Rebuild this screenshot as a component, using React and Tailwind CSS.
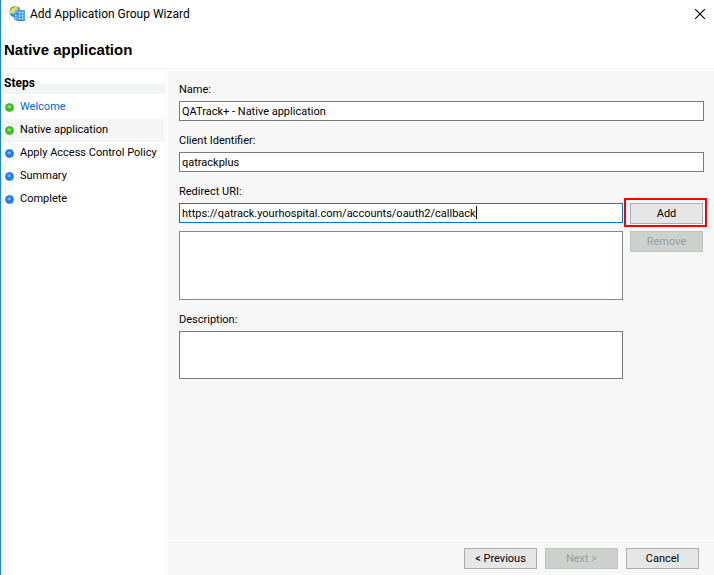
import { useLayoutEffect, useRef, useState } from 'react';
import clsx from 'clsx';

const STEPS = [
  { label: 'Welcome', state: 'done', link: true },
  { label: 'Native application', state: 'done', current: true },
  { label: 'Apply Access Control Policy', state: 'todo' },
  { label: 'Summary', state: 'todo' },
  { label: 'Complete', state: 'todo' },
];

function WizardIcon() {
  return (
    <svg width="16" height="16" viewBox="0 0 16 16" aria-hidden="true">
      <circle cx="6" cy="5.5" r="5.5" fill="#6cc0ee" />
      <path d="M.8 4C1.6 1.8 3.6.2 5.6 0L5 2 3 3.4 2.4 5Z" fill="#6aa637" />
      <path d="M1 5 3 2.6 6 .6 8.6 1.4 8 3.6 6 4.2 5.4 6.6 3.4 7.6 1.4 7Z" fill="#fad650" />
      <path d="M8.4.6C10 1.2 11.2 2.8 11.5 4.4L9.6 3.6Z" fill="#5fa548" />
      <path d="M.8 7.4 3.2 8 5.4 8.6V11C3.2 10.6 1.4 9.4.8 7.4Z" fill="#2a86cc" />
      <path d="M5 8.4 8.6 5.6V15.4L5 13Z" fill="#2f92e0" />
      <path d="M8.6 4.4 15.8 4V15H8.6Z" fill="#2b8ad8" />
      <path d="M9.6 5.6h2v2.2h-2zM12.6 5.4h2v2.2h-2zM9.6 8.8h2v2h-2zM12.6 8.6h2v2h-2zM9.6 11.8h2v2h-2zM12.6 11.6h2v2h-2zM6 8.8h1.5v1.6H6zM6 11.4h1.5V13H6z" fill="#aee4ff" />
    </svg>
  );
}

function StepDot({ done }) {
  return (
    <svg width="9" height="9" viewBox="0 0 9 9" className="shrink-0" aria-hidden="true">
      <circle cx="4.5" cy="4.5" r="4" fill={done ? '#3cc41c' : '#1c80fa'} stroke={done ? '#4fa03c' : '#2f70cc'} strokeWidth="0.8" />
      <ellipse cx="4.2" cy="3.8" rx="1.8" ry="1.4" fill={done ? '#8fe673' : '#78b6ff'} />
    </svg>
  );
}

function Field({ id, label, children }) {
  return (
    <div>
      <label htmlFor={id} className="block h-[22px] leading-[22px]">{label}</label>
      {children}
    </div>
  );
}

function WizardButton({ className, children, ...props }) {
  return (
    <button
      type="button"
      className={clsx(
        'h-[21px] w-[73px] border border-[#adadad] bg-[#e6e6e6] leading-4 whitespace-nowrap disabled:border-[#bfc5c1] disabled:bg-[#ccd1cd] disabled:text-[#9a9f9b]',
        className
      )}
      {...props}
    >
      {children}
    </button>
  );
}

const inputClass = 'block h-5 w-full border border-[#7a7a7a] bg-white px-0.5 outline-none';

// Text box with a steady, non-blinking caret at the end of the value
function CaretInput({ className, value, ...props }) {
  const ref = useRef(null);
  const [caretX, setCaretX] = useState(0);

  useLayoutEffect(() => {
    const ctx = document.createElement('canvas').getContext('2d');
    const style = getComputedStyle(ref.current);
    ctx.font = `${style.fontSize} ${style.fontFamily}`;
    setCaretX(Math.ceil(ctx.measureText(value).width) + 3);
  }, [value]);

  return (
    <div className="relative overflow-hidden">
      <input ref={ref} className={clsx(inputClass, 'caret-transparent', className)} value={value} {...props} />
      <span className="pointer-events-none absolute top-[3px] h-[13px] w-px bg-black" style={{ left: caretX }} />
    </div>
  );
}

export default function App() {
  const [name, setName] = useState('QATrack+ - Native application');
  const [clientId, setClientId] = useState('qatrackplus');
  const [redirectUri, setRedirectUri] = useState('https://qatrack.yourhospital.com/accounts/oauth2/callback');
  const [description, setDescription] = useState('');

  return (
    <div className="flex min-h-screen flex-col border-l border-[#1883d7] bg-white font-['Roboto',sans-serif] text-[11px] text-black">
      <header className="border-b border-[#f2f2f2]">
        <div className="flex h-7 items-center px-2">
          <WizardIcon />
          <span className="ml-[5px] flex-1 text-[12px]">Add Application Group Wizard</span>
          <button type="button" aria-label="Close" className="p-px">
            <svg width="10" height="10" viewBox="0 0 10 10" stroke="#000" strokeWidth="1.1" aria-hidden="true">
              <path d="M0 0 10 10M10 0 0 10" />
            </svg>
          </button>
        </div>
        <h1 className="flex h-10 items-center px-[3px] pt-1 font-['Liberation_Sans',sans-serif] text-[15px] font-bold">Native application</h1>
      </header>

      <div className="flex flex-1 pt-0.5">
        <nav className="mr-0.5 w-[165px] shrink-0 border-r border-[#f7f7f7]">
          <h2 className="h-[23px] bg-linear-to-b from-white from-55% to-[#f3f5f4] to-60% px-[3px] text-[12px] leading-6 font-bold">Steps</h2>
          <ul className="pt-0.5 pr-px">
            {STEPS.map((step) => (
              <li key={step.label} className={clsx('flex h-[23px] items-center gap-1.5 pl-1', step.current && 'bg-[#f5f5f5]')}>
                <StepDot done={step.state === 'done'} />
                {step.link ? (
                  <a href="#welcome" className="text-[#0066ee]">{step.label}</a>
                ) : (
                  <span className="whitespace-nowrap">{step.label}</span>
                )}
              </li>
            ))}
          </ul>
        </nav>

        <main className="flex min-w-0 flex-1 flex-col bg-[#f7f7f7]">
          <form className="flex flex-1 flex-col gap-[9px] pt-2 pr-2.5 pl-[11px]">
            <Field id="name" label="Name:">
              <input id="name" className={inputClass} value={name} onChange={(e) => setName(e.target.value)} />
            </Field>
            <Field id="client-id" label="Client Identifier:">
              <input id="client-id" className={inputClass} value={clientId} onChange={(e) => setClientId(e.target.value)} />
            </Field>
            <Field id="redirect-uri" label="Redirect URI:">
              <div className="flex gap-[7px]">
                <div className="flex min-w-0 flex-1 flex-col gap-2">
                  <CaretInput
                    id="redirect-uri"
                    autoFocus
                    className="focus:border-[#0078d7]"
                    value={redirectUri}
                    onChange={(e) => setRedirectUri(e.target.value)}
                  />
                  <select size={4} aria-label="Redirect URIs" className="h-[69px] w-full border border-[#828790] bg-white outline-none" />
                </div>
                <div className="flex flex-col gap-[7px] pr-px">
                  <div className="relative flex">
                    <WizardButton>Add</WizardButton>
                    <span className="pointer-events-none absolute -top-[5px] -right-1 -bottom-[3px] -left-1.5 border-2 border-[#ff0000]" />
                  </div>
                  <WizardButton disabled>Remove</WizardButton>
                </div>
              </div>
            </Field>
            <div className="pr-[81px]">
              <Field id="description" label="Description:">
                <textarea
                  id="description"
                  className="block h-12 w-full resize-none border border-[#7a7a7a] bg-white px-0.5 outline-none"
                  value={description}
                  onChange={(e) => setDescription(e.target.value)}
                />
              </Field>
            </div>
          </form>

          <footer className="flex justify-end gap-2 border-t border-white pt-[7px] pr-[15px] pb-1.5">
            <WizardButton>&lt; Previous</WizardButton>
            <WizardButton disabled>Next &gt;</WizardButton>
            <WizardButton>Cancel</WizardButton>
          </footer>
        </main>
      </div>
    </div>
  );
}
